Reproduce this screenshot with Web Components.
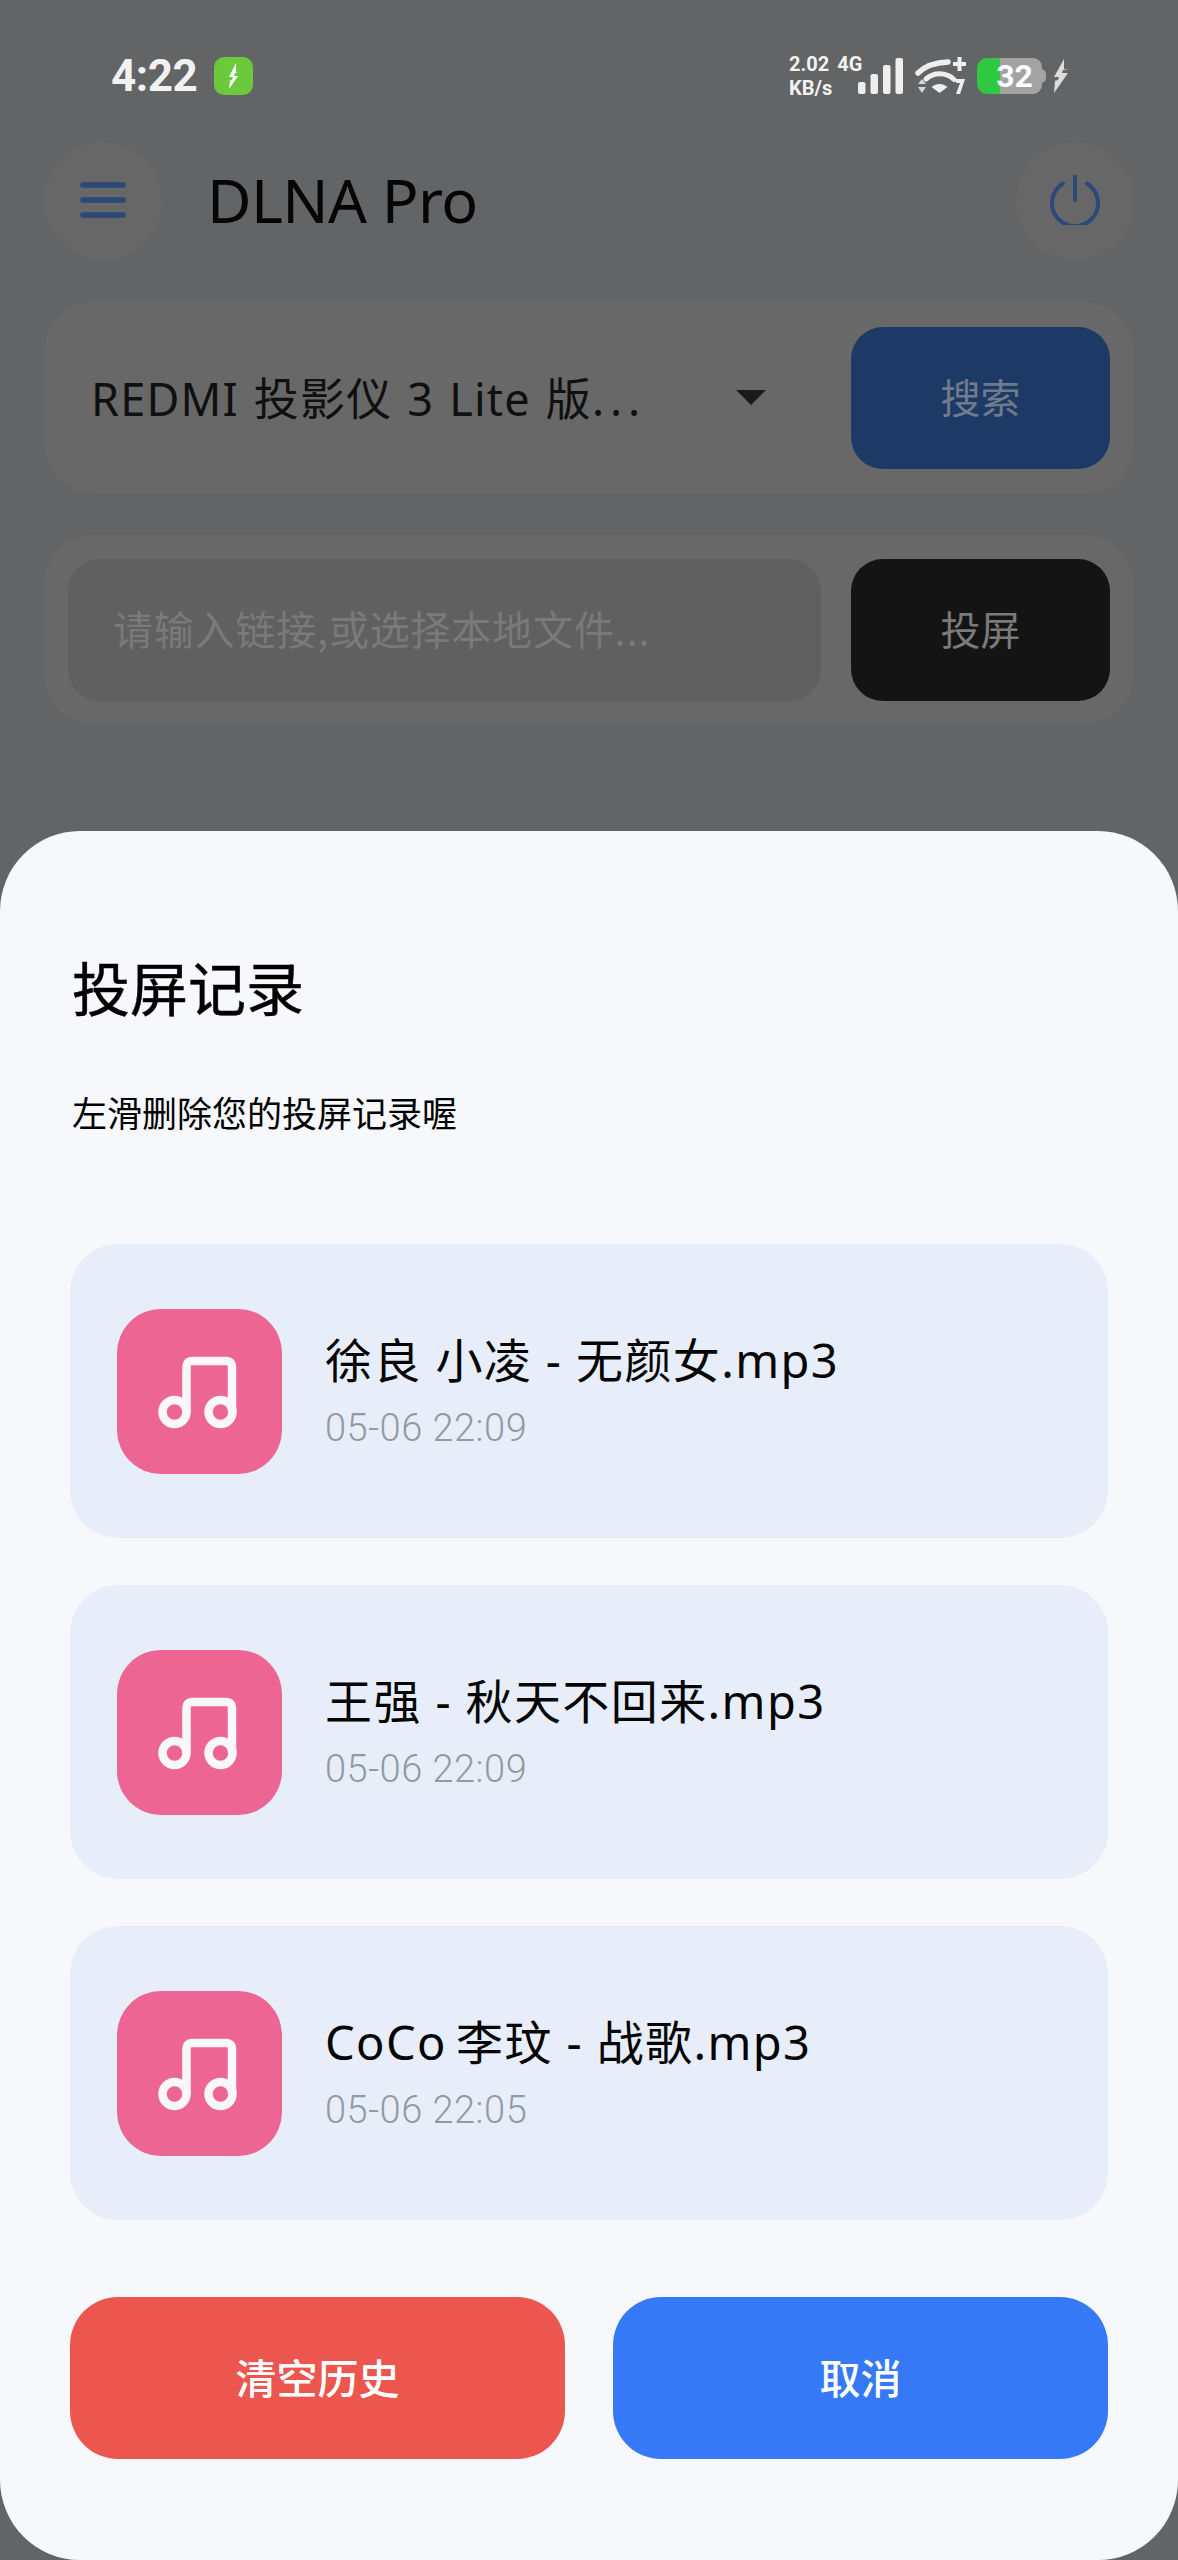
<!DOCTYPE html>
<html lang="zh-CN">
<head>
<meta charset="utf-8">
<title>DLNA Pro</title>
<style>
  html, body { margin: 0; padding: 0; }
  body { width: 1178px; height: 2560px; overflow: hidden; background: #636466;
         font-family: "Noto Sans", "Noto Sans CJK SC", sans-serif; }
</style>
</head>
<body>
<dlna-app>
  <status-bar></status-bar>
  <app-bar title="DLNA Pro"></app-bar>
  <device-row label="REDMI 投影仪 3 Lite 版"></device-row>
  <url-row placeholder="请输入链接,或选择本地文件..."></url-row>
  <history-sheet slot="overlay" heading="投屏记录" hint="左滑删除您的投屏记录喔">
    <history-item name="徐良 小凌 - 无颜女.mp3" time="05-06 22:09"></history-item>
    <history-item name="王强 - 秋天不回来.mp3" time="05-06 22:09"></history-item>
    <history-item name="CoCo&#8201;李玟 - 战歌.mp3" time="05-06 22:05"></history-item>
    <sheet-button slot="actions" color="#ec564e">清空历史</sheet-button>
    <sheet-button slot="actions" color="#3579f6">取消</sheet-button>
  </history-sheet>
</dlna-app>

<script>
// small helper so every element is just a template string
function shadow(el, html) {
  el.attachShadow({ mode: "open" });
  el.shadowRoot.innerHTML = html;
}

class DlnaApp extends HTMLElement {
  connectedCallback() {
    shadow(this, `
      <style>
        :host { display: block; position: relative; width: 1178px; height: 2560px; overflow: hidden; background: #636466; }
        .content { display: flex; flex-direction: column; }
        ::slotted(history-sheet) { position: absolute; left: 0; right: 0; top: 831px; bottom: 0; }
      </style>
      <div class="content"><slot></slot></div>
      <slot name="overlay"></slot>`);
  }
}

class StatusBar extends HTMLElement {
  connectedCallback() {
    shadow(this, `
      <style>
        :host { display: flex; align-items: center; box-sizing: border-box; height: 152px; padding: 0 109px 0 111px; color: #f2f2f2; font-family: Roboto, sans-serif; }
        .row { display: flex; align-items: center; height: 40px; margin-top: -1px; }
        .time { font-size: 44px; font-weight: 700; width: 103px; line-height: 40px; letter-spacing: -.5px; }
        .badge { width: 39px; height: 38px; border-radius: 10px; background: #6bc93b; display: flex; align-items: center; justify-content: center; }
        .right { margin-left: auto; }
        .net { width: 69px; font-size: 20px; font-weight: 700; line-height: 24px; white-space: nowrap; }
        .net div { height: 24px; }
        .g4 { margin-left: 8px; }
        .signal { width: 46px; height: 36px; margin-right: 11px; }
        .wifi { width: 52px; height: 38px; margin-right: 10px; }
        .battery { position: relative; width: 69px; height: 36px; margin-right: 7px; }
        .battery svg { display: block; }
        .battery span { position: absolute; left: 13px; right: 7px; top: 0; line-height: 37px; font-size: 32px; font-weight: 700; color: #fff; text-align: center; }
        .bolt { width: 16px; height: 34px; }
      </style>
      <div class="row">
        <span class="time">4:22</span>
        <span class="badge"><svg width="16" height="26" viewBox="0 0 16 26"><path d="M10 0 3 14h4l-1 3-3 1 1 0-1 8 9-13H8l1-3 3-1-2 0z" fill="#fff"/></svg></span>
      </div>
      <div class="row right">
        <div class="net"><div>2.02<span class="g4">4G</span></div><div>KB/s</div></div>
        <svg class="signal" viewBox="0 0 46 36" fill="#eeeeee">
          <rect x="0" y="24" width="7.5" height="12" rx="2"/>
          <rect x="12.5" y="16" width="7.5" height="20" rx="2"/>
          <rect x="25" y="7" width="7.5" height="29" rx="2"/>
          <rect x="37.5" y="0" width="7.5" height="36" rx="2"/>
        </svg>
        <svg class="wifi" viewBox="0 0 52 38">
          <path d="M3 16C10 9 20 5.500 33 5" fill="none" stroke="#eeeeee" stroke-width="5.500" stroke-linecap="round"/>
          <path d="M11 22c8-7 20-7 28 .5" fill="none" stroke="#eeeeee" stroke-width="5" stroke-linecap="round"/>
          <path d="M16.500 30c5-4 11-4 16 0l-8 6z" fill="#eeeeee"/>
          <path d="M3 27l4-5 4 5zM3 30l4 6 4-6z" fill="#d8d8d8"/>
          <path d="M38 7h13M44.500 0v14" fill="none" stroke="#eeeeee" stroke-width="4"/>
          <path d="M41 22h9l-5 15h-4l4-11h-4z" fill="#eeeeee"/>
        </svg>
        <div class="battery">
          <svg width="69" height="36" viewBox="0 0 69 36">
            <path d="M10 0h46a9 9 0 0 1 9 9v18a9 9 0 0 1-9 9H10z" fill="#a3a3a3"/>
            <path d="M23 0H10A10 10 0 0 0 0 10v16a10 10 0 0 0 10 10h13z" fill="#2ec940"/>
            <path d="M65 11c3 1 4 3 4 7s-1 6-4 7z" fill="#a3a3a3"/>
          </svg>
          <span>32</span>
        </div>
        <svg class="bolt" viewBox="0 0 16 34"><path d="M11 0 1 18h5l-1 3-4 1 1 0-1 12 14-20H9l1-3 5-1-4 0z" fill="#dcdcdc"/></svg>
      </div>`);
  }
}

class AppBar extends HTMLElement {
  connectedCallback() {
    shadow(this, `
      <style>
        :host { display: flex; align-items: center; box-sizing: border-box; height: 120px; margin-top: -11px; padding: 0 44px 0 44px; margin-bottom: 41px; }
        .btn { width: 118px; height: 118px; border-radius: 50%; background: #676767; display: flex; align-items: center; justify-content: center; flex: none; }
        .btn svg { margin-bottom: 3px; }
        h1 { margin: -3px 0 0 45px; font: 400 61px "Noto Sans", sans-serif; color: #050505; flex: 1; letter-spacing: -.6px; }
      </style>
      <div class="btn">
        <svg width="46" height="36" viewBox="0 0 46 36"><path d="M3 3h40M3 18h40M3 33h40" stroke="#2a4878" stroke-width="5.500" stroke-linecap="round" fill="none"/></svg>
      </div>
      <h1>${this.getAttribute("title")}</h1>
      <div class="btn">
        <svg width="52" height="50" viewBox="0 0 52 50"><path d="M14 8.500A23 23 0 1 0 38 8.500M26 1v24" stroke="#2a4878" stroke-width="4" stroke-linecap="round" fill="none"/></svg>
      </div>`);
  }
}

class DeviceRow extends HTMLElement {
  connectedCallback() {
    shadow(this, `
      <style>
        :host { display: flex; align-items: center; box-sizing: border-box; height: 191px; margin: 0 45px 42px; padding: 0 23px 0 46px; border-radius: 48px; background: #686868; }
        .label { font: 400 45px "Noto Sans", "Noto Sans CJK SC", sans-serif; color: #101010; white-space: nowrap; width: 645px; letter-spacing: 1.2px; margin-top: -3px; word-spacing: 2px; }
        .dots { letter-spacing: 6px; }
        .arrow { width: 0; height: 0; border-left: 15px solid transparent; border-right: 15px solid transparent; border-top: 15px solid #1a1a1a; }
        .go { margin-left: auto; width: 259px; height: 142px; border-radius: 32px; background: #1d3a66; color: #707c8c; font: 400 40px "Noto Sans CJK SC", sans-serif; display: flex; align-items: center; justify-content: center; padding-bottom: 3px; box-sizing: border-box; }
      </style>
      <span class="label">${this.getAttribute("label")}<span class="dots">...</span></span>
      <span class="arrow"></span>
      <div class="go">搜索</div>`);
  }
}

class UrlRow extends HTMLElement {
  connectedCallback() {
    shadow(this, `
      <style>
        :host { display: flex; align-items: center; justify-content: space-between; box-sizing: border-box; height: 189px; margin: 0 45px; padding: 0 23px; border-radius: 48px; background: #686868; }
        .field { width: 753px; height: 142px; box-sizing: border-box; padding: 0 0 3px 45px; border-radius: 32px; background: #606060; color: #7a7a7a; font: 400 40px "Noto Sans CJK SC", sans-serif; letter-spacing: .8px; display: flex; align-items: center; white-space: nowrap; }
        .go { width: 259px; height: 142px; box-sizing: border-box; padding-bottom: 3px; border-radius: 32px; background: #141414; color: #7a7a7a; font: 400 40px "Noto Sans CJK SC", sans-serif; display: flex; align-items: center; justify-content: center; }
      </style>
      <div class="field">${this.getAttribute("placeholder")}</div>
      <div class="go">投屏</div>`);
  }
}

class HistorySheet extends HTMLElement {
  connectedCallback() {
    shadow(this, `
      <style>
        :host { display: flex; flex-direction: column; box-sizing: border-box; padding: 0 70px; background: #f6f8fc; border-radius: 80px; color: #000; font-family: "Noto Sans", "Noto Sans CJK SC", sans-serif; }
        h2 { margin: 113px 0 0 2px; font: 400 58px/84px "Noto Sans CJK SC", sans-serif; -webkit-text-stroke: .5px #000; }
        p { margin: 58px 0 0 2px; font: 400 35px/52px "Noto Sans CJK SC", sans-serif; }
        .list { display: flex; flex-direction: column; gap: 47px; margin-top: 106px; }
        .actions { display: flex; justify-content: space-between; margin-top: 77px; }
      </style>
      <h2>${this.getAttribute("heading")}</h2>
      <p>${this.getAttribute("hint")}</p>
      <div class="list"><slot></slot></div>
      <div class="actions"><slot name="actions"></slot></div>`);
  }
}

class HistoryItem extends HTMLElement {
  connectedCallback() {
    shadow(this, `
      <style>
        :host { display: flex; align-items: center; box-sizing: border-box; height: 294px; padding: 0 47px; border-radius: 48px; background: #e7eef9; }
        .icon { width: 165px; height: 165px; border-radius: 44px; background: #ec6593; flex: none; }
        .icon svg { display: block; }
        .text { margin-left: 43px; display: flex; flex-direction: column; }
        .name { font: 400 47px/62px "Noto Sans", "Noto Sans CJK SC", sans-serif; color: #050505; white-space: nowrap; letter-spacing: 1.4px; }
        .time { font: 300 38px/50px Roboto, sans-serif; color: #929aa2; margin-top: 12px; letter-spacing: .5px; }
      </style>
      <div class="icon">
        <svg width="165" height="165" viewBox="0 0 165 165" fill="none" stroke="#f9f7fa" stroke-width="8.500">
          <circle cx="57.500" cy="103" r="12"/>
          <circle cx="103.500" cy="103" r="12"/>
          <path d="M69.500 103V57a5 5 0 0 1 5-5h35.500a5 5 0 0 1 5 5v46"/>
        </svg>
      </div>
      <div class="text">
        <span class="name">${this.getAttribute("name")}</span>
        <span class="time">${this.getAttribute("time")}</span>
      </div>`);
  }
}

class SheetButton extends HTMLElement {
  connectedCallback() {
    shadow(this, `
      <style>
        :host { display: flex; align-items: center; justify-content: center; box-sizing: border-box; width: 495px; height: 162px; padding-bottom: 4px; border-radius: 48px; background: ${this.getAttribute("color")}; color: #fff; font: 500 41px "Noto Sans CJK SC", sans-serif; }
      </style>
      <slot></slot>`);
  }
}

customElements.define("dlna-app", DlnaApp);
customElements.define("status-bar", StatusBar);
customElements.define("app-bar", AppBar);
customElements.define("device-row", DeviceRow);
customElements.define("url-row", UrlRow);
customElements.define("history-sheet", HistorySheet);
customElements.define("history-item", HistoryItem);
customElements.define("sheet-button", SheetButton);
</script>
</body>
</html>
